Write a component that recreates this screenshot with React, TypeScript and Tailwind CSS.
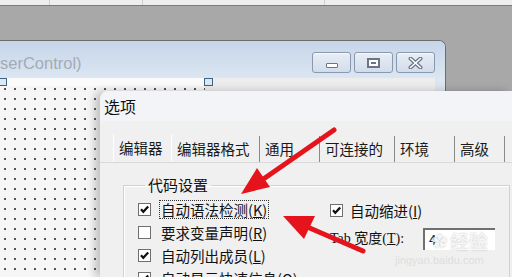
import React from "react";

const cjk = "font-['Noto_Sans_CJK_SC','Noto_Sans',sans-serif]";

const Check = ({ on }: { on: boolean }) => (
  <div className="w-[13px] h-[13px] border border-[#6f6f6f] bg-white flex items-center justify-center shrink-0">
    {on && (
      <svg width="11" height="11" viewBox="0 0 11 11">
        <path d="M2 5.2 L4.3 7.8 L9.2 2.4" fill="none" stroke="#111" strokeWidth="2.2" />
      </svg>
    )}
  </div>
);

const Row = ({ on, label, k, focus }: { on: boolean; label: string; k: string; focus?: boolean }) => (
  <div className="h-[23px] flex items-center gap-[9px] shrink-0">
    <Check on={on} />
    <span
      className={`leading-[17px] px-[1px] text-[14.5px] text-[#111] ${focus ? "outline outline-1 outline-dotted outline-[#333]" : ""}`}
    >
      {label}(<span className="underline">{k}</span>)
    </span>
  </div>
);

const tabs = [
  { name: "编辑器", w: "w-[59px]", active: true },
  { name: "编辑器格式", w: "w-[88px]" },
  { name: "通用", w: "w-[60px]" },
  { name: "可连接的", w: "w-[75px]" },
  { name: "环境", w: "w-[60px]" },
  { name: "高级", w: "w-[50px]" },
];

const WinBtn = ({ children }: { children: React.ReactNode }) => (
  <div className="w-[39px] h-[21px] rounded-[3px] border border-[#8898ad] bg-gradient-to-b from-[#e9eef6] to-[#d2dcea] flex items-center justify-center shadow-[inset_0_1px_0_#f6f9fd]">
    {children}
  </div>
);

export default function App() {
  return (
    <div className={`w-[512px] h-[277px] relative overflow-hidden bg-[#a8a8a8] flex flex-col ${cjk}`}>
      {/* toolbar strip */}
      <div className="h-[5px] bg-[#eeeeee] flex shrink-0">
        <div className="w-[50px] border-r border-[#cfcfcf]" />
        <div className="w-[93px] border-r border-[#cfcfcf]" />
        <div className="w-[182px] border-r border-[#cfcfcf]" />
      </div>
      <div className="h-px bg-[#7c7c7c] shrink-0" />
      <div className="h-[34px] shrink-0" />

      {/* designer window */}
      <div className="w-[446px] flex-1 flex flex-col border-t border-r border-[#6d6d6d] rounded-tr-[7px] overflow-hidden bg-[#dce6f1]">
        <div className="h-[37px] shrink-0 bg-gradient-to-b from-[#c6d5e9] to-[#dce6f2] flex items-start justify-between">
          <span className="mt-[12px] text-[16.5px] leading-[20px] text-[#a3abb5] font-['Liberation_Sans',sans-serif]">
            serControl)
          </span>
          <div className="flex gap-[3px] pt-[11px] pr-[10px]">
            <WinBtn>
              <div className="w-[12px] h-[5px] mt-[5px] rounded-[1px] border border-[#6a7585] bg-white" />
            </WinBtn>
            <WinBtn>
              <div className="w-[13px] h-[10px] border-[2px] border-[#6a7585] bg-white flex items-center justify-center">
                <div className="w-[5px] h-[2px] bg-[#6a7585]" />
              </div>
            </WinBtn>
            <WinBtn>
              <svg width="15" height="12" viewBox="0 0 15 12">
                <path d="M2.5 1.5 L12.5 10.5 M12.5 1.5 L2.5 10.5" stroke="#6a7585" strokeWidth="4" strokeLinecap="round" />
                <path d="M2.5 1.5 L12.5 10.5 M12.5 1.5 L2.5 10.5" stroke="#fff" strokeWidth="1.6" strokeLinecap="round" />
              </svg>
            </WinBtn>
          </div>
        </div>
        <div className="flex-1 mr-[10px] bg-[#ededed] flex flex-col relative">
          <div className="h-[8px] w-[205px] bg-[#fbfbfb] shrink-0" />
          <div className="w-[205px] flex-1 bg-[#f6f6f6] bg-[radial-gradient(circle,#555_0.8px,transparent_1.1px)] bg-size-[10px_10px] bg-position-[0px_-2px]" />
          <div className="absolute left-[-1px] top-[0px] w-[8px] h-[8px] border-[1.5px] border-[#3d6385] bg-[#dbe8f5]" />
          <div className="absolute left-[204px] top-[0px] w-[9px] h-[8px] border-[1.5px] border-[#3d6385] bg-[#dbe8f5]" />
        </div>
      </div>

      {/* options dialog */}
      <div className="absolute left-[100px] top-[91px] right-0 bottom-0 bg-[#f0f0f0] rounded-tl-[8px] shadow-[-5px_0_9px_rgba(0,0,0,0.22)] flex flex-col overflow-hidden">
        <div className="h-[30px] shrink-0 pl-[4px] flex items-center text-[16px] text-[#111] bg-[#f3f4f7] rounded-tl-[8px]">
          选项
        </div>
        <div className="h-[15px] shrink-0" />
        <div className="flex shrink-0 pl-[13px] h-[27px] border-b border-[#d9d9d9] items-end">
          {tabs.map((t) => (
            <div
              key={t.name}
              className={`${t.w} ${t.active ? "h-[28px] border-l border-white" : "h-[26px]"} border-r border-[#8a8a8a] flex items-center pl-[5px] text-[14.5px] text-[#1a1a1a]`}
            >
              {t.name}
            </div>
          ))}
        </div>
        <div className="pl-[23px] pr-[4px] pt-[12px] shrink-0">
          <fieldset className="border border-[#cdd2d6] shadow-[inset_1px_1px_0_#fff] h-[120px] px-[14px]">
            <legend className="ml-[7px] px-[3px] text-[15px] leading-[20px] text-[#111]">代码设置</legend>
            <div className="flex pt-[3px]">
              <div className="w-[192px] flex flex-col">
                <Row on label="自动语法检测" k="K" focus />
                <Row on={false} label="要求变量声明" k="R" />
                <Row on label="自动列出成员" k="L" />
                <Row on label="自动显示快速信息" k="Q" />
              </div>
              <div className="flex flex-col">
                <div className="h-[23px] flex items-center gap-[7px] mt-[1px]">
                  <Check on />
                  <span className="text-[14.5px] text-[#111] leading-[17px]">
                    自动缩进(<span className="underline">I</span>)
                  </span>
                </div>
                <div className="flex items-center mt-[5px] h-[23px]">
                  <span className="text-[14px] text-[#111] w-[93px] font-['Liberation_Serif','Noto_Sans_CJK_SC',serif]">
                    Tab 宽度(<span className="underline">T</span>):
                  </span>
                  <div className="w-[72px] h-[22px] border-l-2 border-t-2 border-[#707070] bg-white text-[13px] pl-[4px] leading-[20px] text-[#222]">
                    4
                  </div>
                </div>
              </div>
            </div>
          </fieldset>
        </div>
      </div>

      {/* watermark */}
      <div className="absolute left-[432px] top-[227px] flex items-center gap-[3px] text-white/85 text-[19px] [text-shadow:0_0_2px_rgba(0,0,0,0.3)]">
        <span className="text-[15px]">✿</span>
        <span>经验</span>
      </div>
      <div className="absolute left-[395px] top-[252px] text-[11px] text-[#dedede] font-['Liberation_Sans',sans-serif]">
        jingyan.baidu.com
      </div>

      {/* red arrows */}
      <svg className="absolute inset-0 pointer-events-none" width="512" height="277" viewBox="0 0 512 277">
        <line x1="334" y1="130" x2="262" y2="180" stroke="#e5141c" strokeWidth="5" strokeLinecap="round" />
        <polygon points="241,194 257,168 270,187" fill="#e5141c" />
        <line x1="363" y1="251" x2="305" y2="226" stroke="#e5141c" strokeWidth="5" strokeLinecap="round" />
        <polygon points="283,216 315,216 304,239" fill="#e5141c" />
      </svg>
    </div>
  );
}
